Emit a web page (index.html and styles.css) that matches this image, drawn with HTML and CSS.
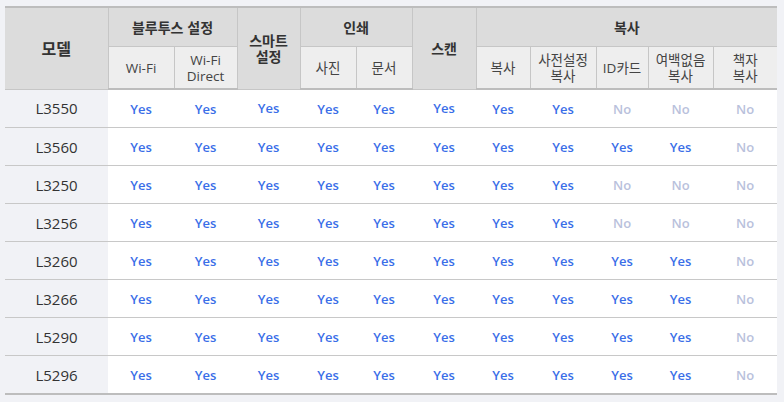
FILE: index.html
```html
<!DOCTYPE html>
<html lang="ko">
<head>
<meta charset="utf-8">
<link rel="stylesheet" href="styles.css">
</head>
<body>
<table class="spec">
  <colgroup>
    <col class="c-model"><col class="c66"><col class="c63"><col class="c63"><col class="c56"><col class="c56"><col class="c64"><col class="c54"><col class="c66"><col class="c52"><col class="c65"><col class="c64">
  </colgroup>
  <thead>
    <tr class="h1">
      <th rowspan="2" class="big">모델</th>
      <th colspan="2">블루투스 설정</th>
      <th rowspan="2" class="two">스마트<br>설정</th>
      <th colspan="2">인쇄</th>
      <th rowspan="2">스캔</th>
      <th colspan="5">복사</th>
    </tr>
    <tr class="h2">
      <th>Wi-Fi</th>
      <th>Wi-Fi<br>Direct</th>
      <th>사진</th>
      <th>문서</th>
      <th>복사</th>
      <th>사전설정<br>복사</th>
      <th>ID카드</th>
      <th>여백없음<br>복사</th>
      <th>책자<br>복사</th>
    </tr>
  </thead>
  <tbody>
    <tr><td class="model">L3550</td><td class="y">Yes</td><td class="y">Yes</td><td class="y">Yes</td><td class="y">Yes</td><td class="y">Yes</td><td class="y">Yes</td><td class="y">Yes</td><td class="y">Yes</td><td class="n">No</td><td class="n">No</td><td class="n">No</td></tr>
    <tr><td class="model">L3560</td><td class="y">Yes</td><td class="y">Yes</td><td class="y">Yes</td><td class="y">Yes</td><td class="y">Yes</td><td class="y">Yes</td><td class="y">Yes</td><td class="y">Yes</td><td class="y">Yes</td><td class="y">Yes</td><td class="n">No</td></tr>
    <tr><td class="model">L3250</td><td class="y">Yes</td><td class="y">Yes</td><td class="y">Yes</td><td class="y">Yes</td><td class="y">Yes</td><td class="y">Yes</td><td class="y">Yes</td><td class="y">Yes</td><td class="n">No</td><td class="n">No</td><td class="n">No</td></tr>
    <tr><td class="model">L3256</td><td class="y">Yes</td><td class="y">Yes</td><td class="y">Yes</td><td class="y">Yes</td><td class="y">Yes</td><td class="y">Yes</td><td class="y">Yes</td><td class="y">Yes</td><td class="n">No</td><td class="n">No</td><td class="n">No</td></tr>
    <tr><td class="model">L3260</td><td class="y">Yes</td><td class="y">Yes</td><td class="y">Yes</td><td class="y">Yes</td><td class="y">Yes</td><td class="y">Yes</td><td class="y">Yes</td><td class="y">Yes</td><td class="y">Yes</td><td class="y">Yes</td><td class="n">No</td></tr>
    <tr><td class="model">L3266</td><td class="y">Yes</td><td class="y">Yes</td><td class="y">Yes</td><td class="y">Yes</td><td class="y">Yes</td><td class="y">Yes</td><td class="y">Yes</td><td class="y">Yes</td><td class="y">Yes</td><td class="y">Yes</td><td class="n">No</td></tr>
    <tr><td class="model">L5290</td><td class="y">Yes</td><td class="y">Yes</td><td class="y">Yes</td><td class="y">Yes</td><td class="y">Yes</td><td class="y">Yes</td><td class="y">Yes</td><td class="y">Yes</td><td class="y">Yes</td><td class="y">Yes</td><td class="n">No</td></tr>
    <tr><td class="model">L5296</td><td class="y">Yes</td><td class="y">Yes</td><td class="y">Yes</td><td class="y">Yes</td><td class="y">Yes</td><td class="y">Yes</td><td class="y">Yes</td><td class="y">Yes</td><td class="y">Yes</td><td class="y">Yes</td><td class="n">No</td></tr>
  </tbody>
</table>
</body>
</html>
```

FILE: styles.css
```css
html, body {
  margin: 0;
  padding: 0;
  background: #f1f2f6;
}
body {
  padding: 6px 0 0 5px;
  font-family: "Open Sans", "Noto Sans CJK KR", sans-serif;
  color: #333;
}
.spec {
  border-collapse: collapse;
  table-layout: fixed;
  width: 772px;
  border-top: 2px solid #bdbdbd;
  border-bottom: 2px solid #bdbdbd;
}
.c-model { width: 103px; }
.c66 { width: 66px; }
.c63 { width: 63px; }
.c56 { width: 56px; }
.c64 { width: 64px; }
.c54 { width: 54px; }
.c52 { width: 52px; }
.c65 { width: 65px; }

.spec th {
  padding: 0;
  text-align: center;
  vertical-align: middle;
  border-left: 1px solid #c6c6c6;
  border-bottom: 1px solid #c6c6c6;
}
.spec th:first-child { border-left: none; }
.h1 th {
  height: 38px;
  background: #dcdcdc;
  font-family: "Noto Sans CJK KR", sans-serif;
  font-size: 14px;
  font-weight: 700;
  line-height: 16px;
  color: #333;
}
.h1 th.big {
  font-size: 16px;
}
.h1 th.two {
  line-height: 16px;
}
.h2 th {
  height: 41px;
  background: #eeeeee;
  font-family: "Open Sans", "Noto Sans CJK KR", sans-serif;
  font-size: 13.5px;
  font-weight: 400;
  line-height: 16px;
  color: #444;
  border-bottom: 2px solid #bdbdbd;
}
.h2 th:first-child { border-left: 1px solid #c6c6c6; }

.spec td {
  height: 37px;
  padding: 0;
  text-align: center;
  vertical-align: middle;
  background: #fff;
  border-bottom: 1px solid #c8c8c8;
  font-size: 13px;
}
.spec tbody tr:last-child td { border-bottom: none; }
.spec td.model {
  background: #f1f2f6;
  font-size: 15px;
  font-weight: 400;
  color: #333;
}
.spec td.y {
  color: #3a6ee8;
  font-weight: 600;
}
.spec td.n {
  color: #b9c1dc;
  font-weight: 600;
}
```
